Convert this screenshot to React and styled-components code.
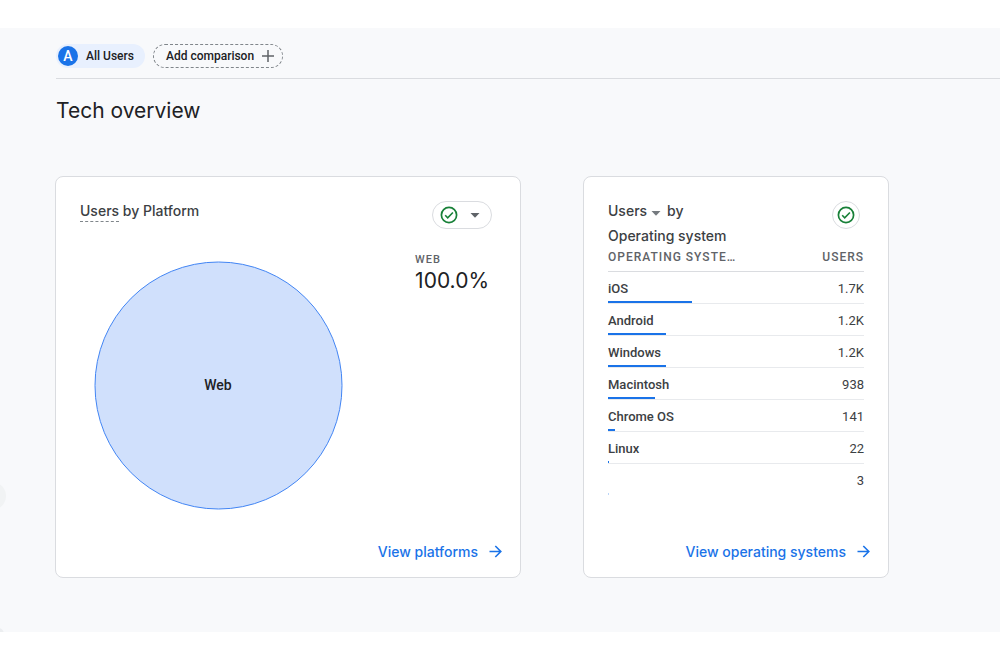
import React from 'react';
import styled, { createGlobalStyle } from 'styled-components';

const GlobalStyle = createGlobalStyle`
  * {
    box-sizing: border-box;
  }

  body {
    margin: 0;
    background-color: #fff;
    color: #202124;
    font-family: Roboto, Arial, sans-serif;
  }

  button {
    font-family: inherit;
    cursor: pointer;
  }
`;

const Page = styled.main`
  position: relative;
  overflow: hidden;
  margin: 28px 0 36px;
  padding: 0 0 54px 56px;
  background-color: #f8f9fb;
`;

const DrawerHandle = styled.div`
  position: absolute;
  top: 454px;
  left: -22px;
  width: 28px;
  height: 28px;
  border-radius: 50%;
  background-color: #f1f3f4;
`;

const DrawerCorner = styled.div`
  position: absolute;
  bottom: -8px;
  left: -8px;
  width: 12px;
  height: 12px;
  border-radius: 50%;
  background-color: #eceef0;
`;

const ComparisonBar = styled.div`
  display: flex;
  align-items: center;
  gap: 8px;
  height: 51px;
  padding-top: 5px;
  border-bottom: 1px solid #dadce0;
`;

const Chip = styled.button`
  display: flex;
  align-items: center;
  gap: 8px;
  height: 24px;
  padding: 0 11px 0 2px;
  border: none;
  border-radius: 12px;
  background-color: #e8f0fe;
  color: #202124;
  font-size: 12px;
  font-weight: 500;
`;

const AddChip = styled(Chip)`
  gap: 7px;
  padding: 0 7px 0 12px;
  border: 1px dashed #80868b;
  background-color: transparent;
`;

const Avatar = styled.span`
  width: 20px;
  height: 20px;
  border-radius: 50%;
  background-color: #1a73e8;
  color: #fff;
  font-size: 14px;
  line-height: 20px;
  text-align: center;
`;

const Title = styled.h1`
  margin: 18px 0 51px;
  font-family: Inter, sans-serif;
  font-size: 21px;
  font-weight: 400;
  line-height: 28px;
`;

const Cards = styled.div`
  display: grid;
  grid-template-columns: 466fr 306fr;
  gap: 62px;
  margin: 0 111px 0 -1px;
`;

const Card = styled.section`
  display: flex;
  flex-direction: column;
  min-height: 402px;
  padding: 24px;
  padding-bottom: 13px;
  border: 1px solid #dadce0;
  border-radius: 8px;
  background-color: #fff;
`;

const CardHeader = styled.header`
  display: flex;
  justify-content: space-between;
  align-items: flex-start;
  margin-right: 4px;
`;

const CardTitle = styled.h2`
  margin: -3px 0 1px;
  color: #3c4043;
  font-family: Inter, sans-serif;
  font-size: 14px;
  font-weight: 500;
  line-height: 25px;
`;

const Metric = styled.span`
  padding-bottom: 2px;
  border-bottom: 1px dashed #80868b;
`;

const MetricButton = styled.button`
  display: inline-flex;
  align-items: baseline;
  gap: 4px;
  margin-right: 6px;
  padding: 0;
  border: none;
  background: none;
  color: inherit;
  font-size: inherit;
  font-weight: inherit;
  line-height: inherit;
`;

const StatusButton = styled.button`
  display: flex;
  flex-shrink: 0;
  align-items: center;
  justify-content: ${(props) => (props.$menu ? 'flex-start' : 'center')};
  gap: 12px;
  width: ${(props) => (props.$menu ? '60px' : '28px')};
  height: 28px;
  padding: ${(props) => (props.$menu ? '0 7px' : '0')};
  border: 1px solid #dadce0;
  border-radius: 14px;
  background-color: #fff;
`;

const PieBody = styled.div`
  display: flex;
  justify-content: space-between;
  margin: 32px 7px 0 14px;
`;

const Legend = styled.div`
  margin-top: -9px;
`;

const LegendLabel = styled.div`
  color: #5f6368;
  font-size: 11px;
  font-weight: 500;
  letter-spacing: 1px;
  line-height: 16px;
`;

const LegendValue = styled.div`
  font-family: Inter, sans-serif;
  font-size: 21px;
  line-height: 26px;
`;

const Table = styled.table`
  width: 100%;
  border-collapse: separate;
  border-spacing: 0;
  table-layout: fixed;
  color: #3c4043;
  font-size: 13px;
`;

const HeadCell = styled.th`
  width: ${(props) => (props.$end ? '50%' : 'auto')};
  height: 23px;
  padding: 1px 0 6px;
  overflow: hidden;
  border-bottom: 1px solid #dadce0;
  color: #5f6368;
  font-size: 12px;
  font-weight: 500;
  letter-spacing: 1px;
  line-height: 15px;
  text-align: ${(props) => (props.$end ? 'right' : 'left')};
  text-overflow: ellipsis;
  white-space: nowrap;
`;

const NameCell = styled.th`
  padding: 2px 0 0;
  font-weight: 500;
  text-align: left;
`;

const ValueCell = styled.td`
  padding: 2px 0 0;
  text-align: right;
`;

const Bar = styled.span`
  position: absolute;
  bottom: 1px;
  left: 0;
  height: 2px;
  background-color: #1a73e8;
`;

const Row = styled.tr`
  position: relative;
  height: 32px;

  & > * {
    border-bottom: 1px solid #e8eaed;
  }

  &:last-child > * {
    border-color: transparent;
  }

  &:last-child ${Bar} {
    opacity: 0.3;
  }
`;

const CardLink = styled.a`
  display: flex;
  align-items: center;
  align-self: flex-end;
  gap: 11px;
  margin: auto -6px 0 0;
  color: #1a73e8;
  font-family: Inter, sans-serif;
  font-size: 14px;
  font-weight: 500;
  line-height: 24px;
  text-decoration: none;
`;

const systems = [
  { name: 'iOS', users: '1.7K', share: 33 },
  { name: 'Android', users: '1.2K', share: 22.7 },
  { name: 'Windows', users: '1.2K', share: 22.7 },
  { name: 'Macintosh', users: '938', share: 18.4 },
  { name: 'Chrome OS', users: '141', share: 2.75 },
  { name: 'Linux', users: '22', share: 0.4 },
  { name: '', users: '3', share: 0.06 },
];

const PlusIcon = () => (
  <svg width="14" height="14" viewBox="0 0 14 14" aria-hidden="true">
    <path d="M7 1v12M1 7h12" stroke="#5f6368" strokeWidth="1.5" />
  </svg>
);

const CaretIcon = ({ color = '#5f6368' }) => (
  <svg width="10" height="5" viewBox="0 0 10 5" aria-hidden="true">
    <path d="M0.5 0h9L5 4.8z" fill={color} />
  </svg>
);

const CheckIcon = () => (
  <svg width="18" height="18" viewBox="0 0 18 18" fill="none" stroke="#188038" aria-hidden="true">
    <circle cx="9" cy="9" r="7.6" strokeWidth="1.7" />
    <path d="M5.2 9.3l2.5 2.5 5.2-5.3" strokeWidth="1.6" />
  </svg>
);

const ArrowIcon = () => (
  <svg width="13" height="14" viewBox="0 0 13 14" fill="none" stroke="#1a73e8" aria-hidden="true">
    <path d="M0.5 6.5h11.3M6.3 1l5.5 5.5L6.3 12" strokeWidth="1.6" />
  </svg>
);

const PlatformCard = () => (
  <Card>
    <CardHeader>
      <CardTitle><Metric>Users</Metric> by Platform</CardTitle>
      <StatusButton $menu aria-label="Data quality">
        <CheckIcon />
        <CaretIcon />
      </StatusButton>
    </CardHeader>
    <PieBody>
      <svg width="249" height="249" viewBox="0 0 249 249" role="img" aria-label="Web 100.0%">
        <circle cx="124.5" cy="124.5" r="123.5" fill="#d0e0fc" stroke="#4285f4" />
        <text x="124" y="129" textAnchor="middle" fontFamily="Roboto, sans-serif" fontSize="14" fontWeight="500" fill="#202124">Web</text>
      </svg>
      <Legend>
        <LegendLabel>WEB</LegendLabel>
        <LegendValue>100.0%</LegendValue>
      </Legend>
    </PieBody>
    <CardLink href="#platforms">View platforms <ArrowIcon /></CardLink>
  </Card>
);

const SystemCard = () => (
  <Card>
    <CardHeader>
      <CardTitle>
        <MetricButton>Users <CaretIcon color="#757a7f" /></MetricButton>
        by
        <br />
        Operating system
      </CardTitle>
      <StatusButton aria-label="Data quality">
        <CheckIcon />
      </StatusButton>
    </CardHeader>
    <Table>
      <thead>
        <tr>
          <HeadCell scope="col">OPERATING SYSTEM</HeadCell>
          <HeadCell scope="col" $end>USERS</HeadCell>
        </tr>
      </thead>
      <tbody>
        {systems.map((system) => (
          <Row key={system.users + system.name}>
            <NameCell scope="row">
              {system.name}
              <Bar style={{ width: `${system.share}%` }} />
            </NameCell>
            <ValueCell>{system.users}</ValueCell>
          </Row>
        ))}
      </tbody>
    </Table>
    <CardLink href="#systems">View operating systems <ArrowIcon /></CardLink>
  </Card>
);

export default function App() {
  return (
    <>
      <GlobalStyle />
      <Page>
        <DrawerHandle />
        <DrawerCorner />
        <ComparisonBar>
          <Chip><Avatar>A</Avatar>All Users</Chip>
          <AddChip>Add comparison <PlusIcon /></AddChip>
        </ComparisonBar>
        <Title>Tech overview</Title>
        <Cards>
          <PlatformCard />
          <SystemCard />
        </Cards>
      </Page>
    </>
  );
}
